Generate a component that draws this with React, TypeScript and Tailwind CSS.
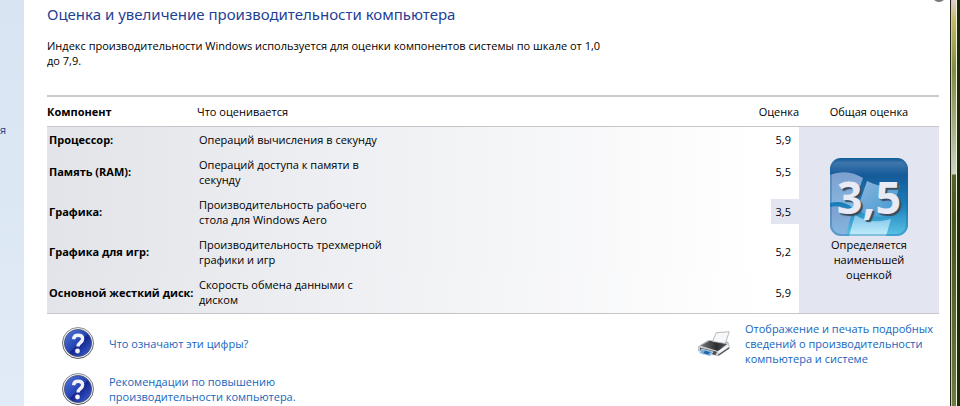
interface Component {
  name: string;
  description: string;
  score: string;
}

const components: Component[] = [
  { name: 'Процессор:', description: 'Операций вычисления в секунду', score: '5,9' },
  { name: 'Память (RAM):', description: 'Операций доступа к памяти в секунду', score: '5,5' },
  { name: 'Графика:', description: 'Производительность рабочего стола для Windows Aero', score: '3,5' },
  { name: 'Графика для игр:', description: 'Производительность трехмерной графики и игр', score: '5,2' },
  { name: 'Основной жесткий диск:', description: 'Скорость обмена данными с диском', score: '5,9' },
];

const baseScore = '3,5';

function HelpIcon() {
  return (
    <svg viewBox="0 0 32 32" className="h-8 w-8 shrink-0" aria-hidden="true">
      <defs>
        <linearGradient id="helpRing" x1="0" y1="0" x2="0" y2="1">
          <stop offset="0" stopColor="#8b8f98" />
          <stop offset="1" stopColor="#55565c" />
        </linearGradient>
        <linearGradient id="helpFill" x1="0" y1="0" x2="1" y2="1">
          <stop offset="0" stopColor="#5578dc" />
          <stop offset="0.5" stopColor="#2443b4" />
          <stop offset="0.54" stopColor="#15248b" />
          <stop offset="1" stopColor="#3f6ae0" />
        </linearGradient>
      </defs>
      <circle cx="16" cy="16" r="15.5" fill="#f1f2f4" stroke="url(#helpRing)" />
      <circle cx="16" cy="16" r="13.6" fill="url(#helpFill)" stroke="#44506f" strokeWidth="0.8" />
      <path d="M11.500 12.200c.4-2.800 2.200-3.900 4.600-3.900 2.900 0 4.500 1.400 4.500 3.600 0 3.700-4.600 3.700-4.600 7.500" fill="none" stroke="#f2f3f7" strokeWidth="3.400" />
      <circle cx="15.500" cy="24" r="2.400" fill="#f2f3f7" />
    </svg>
  );
}

function PrinterIcon() {
  return (
    <svg viewBox="0 0 32 32" className="h-8 w-8 shrink-0" aria-hidden="true">
      <defs>
        <linearGradient id="printerTop" x1="0" y1="0" x2="1" y2="0">
          <stop offset="0" stopColor="#77797c" />
          <stop offset="0.6" stopColor="#2c2d2f" />
          <stop offset="1" stopColor="#56585b" />
        </linearGradient>
      </defs>
      <path d="M.5 18.500 10 12.500l20 1.500 1.500 5.500L20.500 28 .5 23z" fill="#c9ccd0" stroke="#96999d" strokeWidth="0.500" />
      <path d="m2.500 17.800 9-5 17.500 3.200-9 7z" fill="url(#printerTop)" />
      <path d="M14.500 13.500 18.300 4.700l13-1L27.300 15.500z" fill="#f6f7f9" stroke="#999da2" strokeWidth="0.700" />
      <path d="m20 23.500 10-7 .8 2-10 7.500z" fill="#f5f6f7" />
      <path d="m20.500 27 10.700-7" stroke="#505256" strokeWidth="1.300" />
      <path d="m2 19.800 17 4-1.500 3.200L2 23z" fill="#4a4e55" />
      <path d="m3.500 21 11.500 2.800-2.800 4.400L1.500 25.200z" fill="#76aede" stroke="#e7f2fa" strokeWidth="0.600" />
      <path d="m7 22.800 5 1.200-1.700 2.500-5-1.300z" fill="#2565a6" />
    </svg>
  );
}

function ScoreBadge({ score }: { score: string }) {
  return (
    <div className="relative mx-auto h-[78px] w-[78px] overflow-hidden rounded-[11px]">
      <svg viewBox="0 0 78 78" className="h-full w-full" aria-hidden="true">
        <defs>
          <linearGradient id="badgeBase" x1="0" y1="0" x2="0" y2="1">
            <stop offset="0" stopColor="#0b5795" />
            <stop offset="0.06" stopColor="#3f76ac" />
            <stop offset="0.22" stopColor="#155a99" />
            <stop offset="0.6" stopColor="#1b7fba" />
            <stop offset="1" stopColor="#5bc4e6" />
          </linearGradient>
          <linearGradient id="badgeLeft" x1="0" y1="0" x2="0" y2="1">
            <stop offset="0" stopColor="#7d9fcf" />
            <stop offset="1" stopColor="#86b8e0" />
          </linearGradient>
          <linearGradient id="badgeRight" x1="0" y1="0" x2="1" y2="1">
            <stop offset="0" stopColor="#8fb5dd" />
            <stop offset="1" stopColor="#3a98d2" />
          </linearGradient>
          <linearGradient id="badgeBottom" x1="0" y1="0" x2="0" y2="1">
            <stop offset="0" stopColor="#7fc1e8" />
            <stop offset="1" stopColor="#c2f0fc" />
          </linearGradient>
        </defs>
        <rect width="78" height="78" fill="url(#badgeBase)" />
        <path d="M0 17C12 12 24 14 33 20L23 50C16 44 8 43 0 45z" fill="url(#badgeLeft)" />
        <path d="M37 23c12 6 23 7 33 4l-9 30c-12 4-22 2-34-5z" fill="url(#badgeRight)" />
        <path d="M0 49c8-2 15 0 22 5l-6 24H0z" fill="url(#badgeLeft)" />
        <path d="M25 57c11 7 21 8 36 4l-5 17H19z" fill="url(#badgeBottom)" />
        <rect x="1" y="1" width="76" height="76" rx="10" fill="none" stroke="#1768a3" strokeWidth="2" opacity="0.35" />
      </svg>
      <span className="absolute inset-0 flex items-center justify-center text-[45px] leading-none font-bold text-[#e8eaf5] [text-shadow:2px_2px_1px_#3c4a5a]">
        {score}
      </span>
    </div>
  );
}

export default function App() {
  return (
    <div className="flex h-screen overflow-hidden bg-white font-['Open_Sans','Noto_Sans',sans-serif] text-[11px] leading-[15px] text-black">
      <aside className="flex w-6 shrink-0 bg-linear-to-b from-[#d9e4f2] to-[#e1ebf7] pt-[122px]">
        <a href="#" className="text-[#15428b]">я</a>
      </aside>

      <main className="relative min-w-0 flex-1 pr-[11px] pl-[23px]">
        <button aria-label="Справка" className="absolute -top-3 right-1 h-[14px] w-[14px] rounded-full border-2 border-[#777] bg-[#ddd]" />

        <h1 className="pt-[3px] font-['Noto_Sans','Open_Sans',sans-serif] text-[15px] leading-[22px] text-[#1f3f94]">
          Оценка и увеличение производительности компьютера
        </h1>
        <p className="mt-[13px] max-w-[565px]">
          Индекс производительности Windows используется для оценки компонентов системы по шкале от 1,0 до 7,9.
        </p>

        <table className="mt-[27px] w-full table-fixed border-collapse text-left">
          <thead className="border-t-2 border-b border-[#cbcbcb] border-b-[#c4c6ca]">
            <tr className="h-[30px]">
              <th className="w-[150px] font-bold">Компонент</th>
              <th className="font-normal">Что оценивается</th>
              <th className="w-[60px] text-right font-normal">Оценка</th>
              <th className="w-[140px] text-center font-normal">Общая оценка</th>
            </tr>
          </thead>
          <tbody className="border-b border-[#c4c6ca] bg-linear-to-r from-[#e2e4e9] to-white to-80%">
            {components.map((c, i) => (
              <tr key={c.name} className={i === 0 ? 'h-[25px]' : i === components.length - 1 ? 'h-[42px]' : 'h-10'}>
                <th className="pl-0.5 font-bold whitespace-nowrap">{c.name}</th>
                <td className="pl-0.5">
                  <div className="max-w-[190px]">{c.description}</div>
                </td>
                <td>
                  <div className={`ml-auto w-7 py-[5px] pr-2 text-right ${c.score === baseScore ? 'bg-[#e3e5f1]' : ''}`}>{c.score}</div>
                </td>
                {i === 0 && (
                  <td rowSpan={components.length} className="bg-[#e3e5f1] text-center">
                    <ScoreBadge score={baseScore} />
                    <p className="mx-auto w-[90px] pt-px">Определяется наименьшей оценкой</p>
                  </td>
                )}
              </tr>
            ))}
          </tbody>
        </table>

        <div className="mt-[7px] flex justify-between text-[#1466bd]">
          <div className="flex flex-col gap-[14px] pt-[6px] pl-[15px]">
            <a href="#" className="flex items-center gap-[15px]">
              <HelpIcon />
              Что означают эти цифры?
            </a>
            <a href="#" className="flex items-center gap-[15px]">
              <HelpIcon />
              <span className="w-[210px]">Рекомендации по повышению производительности компьютера.</span>
            </a>
          </div>
          <a href="#" className="flex items-start gap-[15px]">
            <span className="pt-[7px]">
              <PrinterIcon />
            </span>
            <span className="w-[194px]">Отображение и печать подробных сведений о производительности компьютера и системе</span>
          </a>
        </div>
      </main>

      <div className="flex w-[10px] shrink-0" aria-hidden="true">
        <div className="w-px bg-[#1d2412]" />
        <div className="w-px bg-[#c9d0b4]" />
        <div className="w-1 bg-[linear-gradient(#e3cdd6_0px,#c3ba6a_20px,#848b40_70px,#a9b08a_130px,#cdd5c4_174px,#55642d_175px,#465620_220px,#6d7c40_100%)]" />
        <div className="w-px bg-[#f0f3e6]" />
        <div className="flex-1 bg-[#1f2a06]" />
      </div>
    </div>
  );
}
